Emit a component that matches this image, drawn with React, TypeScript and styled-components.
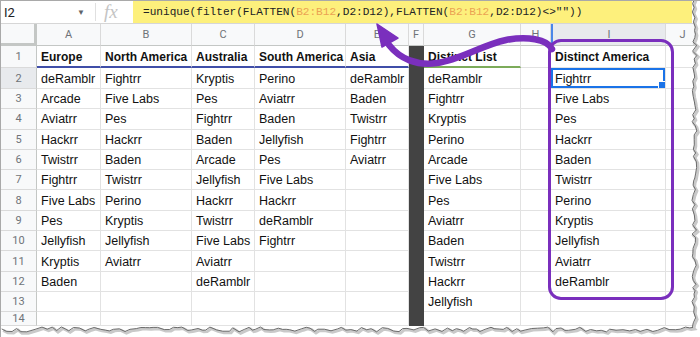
import React from 'react';
import styled, { createGlobalStyle } from 'styled-components';

const GlobalStyle = createGlobalStyle`
  html, body {
    margin: 0;
    padding: 0;
    background: #ffffff;
  }
  body {
    font-family: "Liberation Sans", Arial, sans-serif;
  }
`;

type Column = { key: string; width: string; underline?: string; dark?: boolean };

const COLUMNS: Column[] = [
  { key: 'A', width: '64px', underline: '#3f4ea8' },
  { key: 'B', width: '91px', underline: '#3f4ea8' },
  { key: 'C', width: '63px', underline: '#3f4ea8' },
  { key: 'D', width: '91px', underline: '#3f4ea8' },
  { key: 'E', width: '63px', underline: '#3f4ea8' },
  { key: 'F', width: '15px', dark: true },
  { key: 'G', width: '97px', underline: '#7cab5a' },
  { key: 'H', width: '30px' },
  { key: 'I', width: '115px' },
  { key: 'J', width: '1fr' },
];

const ROWS: string[][] = [
  ['Europe', 'North America', 'Australia', 'South America', 'Asia', '', 'Distinct List', '', 'Distinct America', ''],
  ['deRamblr', 'Fightrr', 'Kryptis', 'Perino', 'deRamblr', '', 'deRamblr', '', 'Fightrr', ''],
  ['Arcade', 'Five Labs', 'Pes', 'Aviatrr', 'Baden', '', 'Fightrr', '', 'Five Labs', ''],
  ['Aviatrr', 'Pes', 'Fightrr', 'Baden', 'Twistrr', '', 'Kryptis', '', 'Pes', ''],
  ['Hackrr', 'Hackrr', 'Baden', 'Jellyfish', 'Fightrr', '', 'Perino', '', 'Hackrr', ''],
  ['Twistrr', 'Baden', 'Arcade', 'Pes', 'Aviatrr', '', 'Arcade', '', 'Baden', ''],
  ['Fightrr', 'Twistrr', 'Jellyfish', 'Five Labs', '', '', 'Five Labs', '', 'Twistrr', ''],
  ['Five Labs', 'Perino', 'Hackrr', 'Hackrr', '', '', 'Pes', '', 'Perino', ''],
  ['Pes', 'Kryptis', 'Twistrr', 'deRamblr', '', '', 'Aviatrr', '', 'Kryptis', ''],
  ['Jellyfish', 'Jellyfish', 'Five Labs', 'Fightrr', '', '', 'Baden', '', 'Jellyfish', ''],
  ['Kryptis', 'Aviatrr', 'Aviatrr', '', '', '', 'Twistrr', '', 'Aviatrr', ''],
  ['Baden', '', 'deRamblr', '', '', '', 'Hackrr', '', 'deRamblr', ''],
  ['', '', '', '', '', '', 'Jellyfish', '', '', ''],
  ['', '', '', '', '', '', '', '', '', ''],
];

const Sheet = styled.div`
  position: relative;
  width: 700px;
  height: 337px;
  overflow: hidden;
  box-sizing: border-box;
  border-left: 1px solid #a9a9a9;
  border-top: 1px solid #a9a9a9;
  background: #ffffff;
`;

/* ---------- formula bar ---------- */

const FormulaBar = styled.div`
  display: flex;
  height: 22px;
  border-bottom: 1px solid #d6d6d6;
  box-sizing: content-box;
`;

const NameBox = styled.div`
  width: 95px;
  display: flex;
  align-items: center;
  justify-content: space-between;
  padding: 0 10px 0 3px;
  box-sizing: border-box;
  border-right: 1px solid #e0e0e0;
  margin: 2px 0;
  font-family: Roboto, "Liberation Sans", sans-serif;
  font-size: 13px;
  color: #202124;
`;

const Caret = styled.span`
  font-size: 8px;
  color: #5f6368;
`;

const FxLabel = styled.div`
  width: 37px;
  display: flex;
  align-items: center;
  padding-left: 8px;
  box-sizing: border-box;
  font-family: "Liberation Serif", "DejaVu Serif", serif;
  font-style: italic;
  font-size: 19px;
  color: #c4c4c4;
`;

const FormulaInput = styled.div`
  flex: 1;
  display: flex;
  align-items: center;
  padding-left: 10px;
  margin-right: 8px;
  background: #fdf07c;
  font-family: "Liberation Mono", "DejaVu Sans Mono", monospace;
  font-size: 11.1px;
  color: #202124;
  white-space: pre;
`;

const Ref = styled.span`
  color: #eba253;
`;

/* ---------- grid ---------- */

const Grid = styled.div`
  display: grid;
  grid-template-columns: 36px ${COLUMNS.map((c) => c.width).join(' ')};
  grid-template-rows: 22px 22px 21px repeat(11, 20.3px);
`;

const Corner = styled.div`
  background: #f8f9fa;
  border-right: 3px solid #c4c7c5;
  border-bottom: 3px solid #c4c7c5;
  box-sizing: border-box;
`;

const ColHeader = styled.div<{ $selected?: boolean }>`
  display: flex;
  align-items: center;
  justify-content: center;
  box-sizing: border-box;
  background: ${(p) => (p.$selected ? '#e8eaed' : '#f8f9fa')};
  border-right: 1px solid #dadada;
  border-bottom: 1px solid #c4c7c5;
  border-left: ${(p) => (p.$selected ? '2px solid #4a86e8' : 'none')};
  font-family: Roboto, "Liberation Sans", sans-serif;
  font-size: 11px;
  color: #6f7378;
`;

const RowHeader = styled.div<{ $selected?: boolean }>`
  display: flex;
  align-items: center;
  justify-content: center;
  box-sizing: border-box;
  background: ${(p) => (p.$selected ? '#e8eaed' : '#f8f9fa')};
  border-right: 1px solid #c4c7c5;
  border-bottom: 1px solid #dadada;
  font-family: Roboto, "Liberation Sans", sans-serif;
  font-size: 11px;
  color: #6f7378;
`;

const Cell = styled.div<{ $bold?: boolean; $dark?: boolean; $underline?: string; $selected?: boolean }>`
  position: relative;
  display: flex;
  align-items: center;
  padding: 1px 0 0 4px;
  box-sizing: border-box;
  overflow: hidden;
  white-space: nowrap;
  background: ${(p) => (p.$dark ? '#434343' : '#ffffff')};
  border-right: 1px solid ${(p) => (p.$dark ? '#434343' : '#e2e2e2')};
  border-bottom: ${(p) =>
    p.$underline ? `2px solid ${p.$underline}` : `1px solid ${p.$dark ? '#434343' : '#e2e2e2'}`};
  box-shadow: ${(p) => (p.$selected ? 'inset 0 0 0 2px #1a73e8' : 'none')};
  font-size: ${(p) => (p.$bold ? '12px' : '12.5px')};
  font-weight: ${(p) => (p.$bold ? 700 : 400)};
  color: #111111;
`;

const FillHandle = styled.span`
  position: absolute;
  right: -1px;
  bottom: -1px;
  width: 6px;
  height: 6px;
  background: #1a73e8;
  border: 1px solid #ffffff;
`;

/* ---------- annotations ---------- */

const Highlight = styled.div`
  position: absolute;
  left: 547px;
  top: 38px;
  width: 126px;
  height: 261px;
  box-sizing: border-box;
  border: 3.5px solid #7a2fbd;
  border-radius: 13px;
  pointer-events: none;
`;

const Overlay = styled.svg`
  position: absolute;
  left: 0;
  top: 0;
  pointer-events: none;
`;

const Arrow = () => (
  <Overlay width={700} height={337} viewBox="0 0 700 337">
    <path
      d="M 551 48 C 546 38, 526 35, 505 39 C 481 44, 459 59, 436 62 C 416 65, 399 58, 388 44"
      fill="none"
      stroke="#7a2fbd"
      strokeWidth={6.5}
      strokeLinecap="round"
    />
    <polygon points="376,23 381,46 397,37" fill="#7a2fbd" stroke="#7a2fbd" strokeWidth={1.5} strokeLinejoin="round" />
  </Overlay>
);

// jagged torn edge along the right and bottom
const tornEdge = (() => {
  let seed = 7;
  const rnd = () => {
    seed = (seed * 9301 + 49297) % 233280;
    return seed / 233280;
  };
  const pts: string[] = [];
  for (let y = -2; y < 326; y += 3 + rnd() * 3) {
    pts.push(`${(691 + rnd() * 5).toFixed(1)},${y.toFixed(1)}`);
  }
  for (let x = 692; x > -4; x -= 3 + rnd() * 4) {
    pts.push(`${x.toFixed(1)},${(326 + rnd() * 5).toFixed(1)}`);
  }
  return pts;
})();

const TornEdge = () => {
  const line = tornEdge.join(' ');
  const fill = `705,-5 ${line} -5,340 705,340`;
  return (
    <Overlay width={700} height={337} viewBox="0 0 700 337">
      <polygon points={fill} fill="#ffffff" />
      <polyline points={line} fill="none" stroke="#c9c9c9" strokeWidth={3} transform="translate(1.5 1.5)" />
      <polyline points={line} fill="none" stroke="#6b6b6b" strokeWidth={1} />
    </Overlay>
  );
};

const App = (): JSX.Element => {
  return (
    <>
      <GlobalStyle />
      <Sheet>
        <FormulaBar>
          <NameBox>
            I2
            <Caret>▼</Caret>
          </NameBox>
          <FxLabel>fx</FxLabel>
          <FormulaInput>
            =unique(filter(FLATTEN(<Ref>B2:B12</Ref>,D2:D12),FLATTEN(<Ref>B2:B12</Ref>,D2:D12){'<>""))'}
          </FormulaInput>
        </FormulaBar>

        <Grid>
          <Corner />
          {COLUMNS.map((c) => (
            <ColHeader key={c.key} $selected={c.key === 'I'}>
              {c.key}
            </ColHeader>
          ))}
          {ROWS.map((row, r) => (
            <React.Fragment key={r}>
              <RowHeader $selected={r === 1}>{r + 1}</RowHeader>
              {row.map((text, c) => {
                const col = COLUMNS[c];
                const selected = r === 1 && col.key === 'I';
                return (
                  <Cell
                    key={col.key}
                    $bold={r === 0}
                    $dark={col.dark}
                    $underline={r === 0 ? col.underline : undefined}
                    $selected={selected}
                  >
                    {text}
                    {selected && <FillHandle />}
                  </Cell>
                );
              })}
            </React.Fragment>
          ))}
        </Grid>

        <Highlight />
        <Arrow />
        <TornEdge />
      </Sheet>
    </>
  );
};

export default App;
